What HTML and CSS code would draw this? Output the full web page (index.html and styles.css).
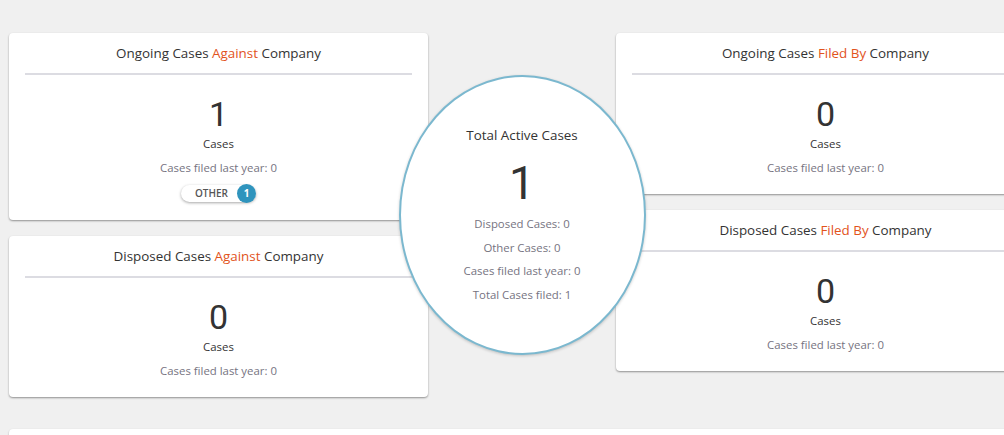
FILE: index.html
```html
<!DOCTYPE html>
<html>
<head>
<meta charset="utf-8">
<link rel="stylesheet" href="styles.css">
</head>
<body>
<div class="dashboard">
  <div class="col">
    <div class="card">
      <div class="card-title">Ongoing Cases <span class="hl">Against</span> Company</div>
      <div class="num">1</div>
      <div class="label">Cases</div>
      <div class="sub">Cases filed last year: 0</div>
      <div class="chip"><span class="chip-text">OTHER</span><span class="badge">1</span></div>
    </div>
    <div class="card">
      <div class="card-title">Disposed Cases <span class="hl">Against</span> Company</div>
      <div class="num">0</div>
      <div class="label">Cases</div>
      <div class="sub">Cases filed last year: 0</div>
    </div>
  </div>
  <div class="center">
    <div class="circle">
      <div class="circle-title">Total Active Cases</div>
      <div class="circle-num">1</div>
      <div class="circle-lines">
        <div class="line">Disposed Cases: 0</div>
        <div class="line">Other Cases: 0</div>
        <div class="line">Cases filed last year: 0</div>
        <div class="line">Total Cases filed: 1</div>
      </div>
    </div>
  </div>
  <div class="col">
    <div class="card">
      <div class="card-title">Ongoing Cases <span class="hl">Filed By</span> Company</div>
      <div class="num">0</div>
      <div class="label">Cases</div>
      <div class="sub">Cases filed last year: 0</div>
    </div>
    <div class="card">
      <div class="card-title">Disposed Cases <span class="hl">Filed By</span> Company</div>
      <div class="num">0</div>
      <div class="label">Cases</div>
      <div class="sub">Cases filed last year: 0</div>
    </div>
  </div>
  <div class="bottom-card"></div>
</div>
</body>
</html>
```
FILE: styles.css
```css
html, body {
  margin: 0;
  padding: 0;
  background: #f0f0f0;
  overflow: hidden;
  font-family: "Open Sans", "Noto Sans", sans-serif;
  color: #333;
}
.dashboard {
  display: grid;
  grid-template-columns: 419px 188px 419px;
  align-items: start;
  padding: 33px 0 0 9px;
  width: max-content;
}
.col {
  display: flex;
  flex-direction: column;
  gap: 16px;
}
.card {
  background: #fff;
  border-radius: 4px;
  box-shadow: 0 1px 2px rgba(0, 0, 0, 0.4);
  padding: 0 16px 18px;
  text-align: center;
}
.card-title {
  height: 40px;
  line-height: 40px;
  font-size: 13.4px;
  border-bottom: 2px solid #dcdce2;
  color: #333;
}
.hl {
  color: #e2531c;
}
.num {
  margin-top: 19px;
  font-family: Roboto, "Open Sans", sans-serif;
  font-size: 34px;
  line-height: 40px;
  color: #333;
}
.label {
  margin-top: 2px;
  font-size: 11.4px;
  line-height: 16px;
  color: #333;
}
.sub {
  margin-top: 8px;
  font-size: 11.4px;
  line-height: 16px;
  color: #76737f;
}
.chip {
  display: inline-flex;
  align-items: center;
  height: 17px;
  margin: 9px auto 0;
  background: #fff;
  border-radius: 9px;
  box-shadow: 0 1px 3px rgba(0, 0, 0, 0.35);
}
.chip-text {
  font-size: 10px;
  font-weight: 600;
  color: #555;
  padding: 0 9px 0 14px;
  line-height: 17px;
}
.badge {
  width: 19px;
  height: 19px;
  border-radius: 50%;
  background: #2f94bd;
  color: #fff;
  font-size: 10px;
  font-weight: 700;
  line-height: 19px;
  text-align: center;
  margin: -1px 0;
}
.center {
  display: flex;
  justify-content: center;
  padding-top: 42px;
}
.circle {
  position: relative;
  z-index: 2;
  box-sizing: border-box;
  flex: none;
  width: 247px;
  height: 280px;
  margin: 0 -30px;
  padding-top: 49px;
  border-radius: 50%;
  border: 2px solid #7bb8cf;
  background: #fff;
  box-shadow: 0 1px 3px rgba(0, 0, 0, 0.2);
  text-align: center;
}
.circle-title {
  font-size: 13.4px;
  line-height: 19px;
  color: #333;
}
.circle-num {
  margin-top: 11px;
  font-family: Roboto, "Open Sans", sans-serif;
  font-size: 46px;
  line-height: 54px;
  color: #333;
}
.circle-lines {
  margin-top: 6px;
  display: flex;
  flex-direction: column;
  gap: 7.6px;
}
.line {
  font-size: 11.4px;
  line-height: 16px;
  color: #76737f;
}
.bottom-card {
  grid-column: 1 / -1;
  margin-top: 32px;
  height: 40px;
  background: #fff;
  border-radius: 4px;
  box-shadow: 0 1px 2px rgba(0, 0, 0, 0.3);
}
```
